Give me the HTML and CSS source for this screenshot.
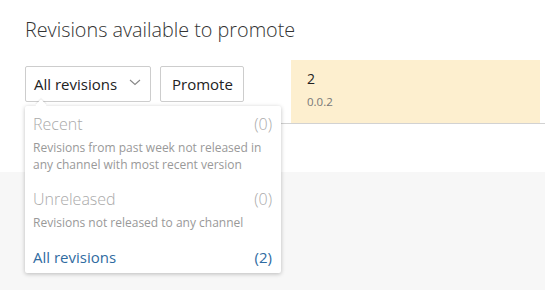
FILE: index.html
```html
<!DOCTYPE html>
<html>
<head>
<meta charset="utf-8">
<link rel="stylesheet" href="styles.css">
</head>
<body>
<div class="panel">
  <h2 class="title">Revisions available to promote</h2>
  <div class="row">
    <div class="controls">
      <div class="select-wrap">
        <div class="select">
          <span>All revisions</span>
          <svg class="chev" width="12" height="7" viewBox="0 0 12 7"><path d="M1 1 L6 5.5 L11 1" fill="none" stroke="#888" stroke-width="1.1"/></svg>
        </div>
        <div class="dropdown">
          <span class="notch"></span>
          <div class="item disabled">
            <div class="item-head"><span>Recent</span><span>(0)</span></div>
            <div class="desc">Revisions from past week not released in any channel with most recent version</div>
          </div>
          <div class="item disabled">
            <div class="item-head"><span>Unreleased</span><span>(0)</span></div>
            <div class="desc">Revisions not released to any channel</div>
          </div>
          <div class="item active">
            <div class="item-head"><span>All revisions</span><span>(2)</span></div>
          </div>
        </div>
      </div>
      <div class="button">Promote</div>
    </div>
    <div class="cell">
      <div class="rev">2</div>
      <div class="ver">0.0.2</div>
    </div>
  </div>
</div>
</body>
</html>
```
FILE: styles.css
```css
html, body {
  margin: 0;
  padding: 0;
}
body {
  background: #f7f7f7;
  font-family: "Open Sans", "Noto Sans", sans-serif;
  color: #333;
  width: 545px;
  height: 290px;
  overflow: hidden;
}
.panel {
  background: #fff;
  height: 172px;
  padding: 16px 0 0 25px;
  box-sizing: border-box;
}
.title {
  margin: 0;
  font-size: 19.8px;
  font-weight: 300;
  line-height: 28px;
  color: #333;
}
.row {
  margin-top: 16px;
  display: flex;
  border-bottom: 1px solid #d2d2d2;
  height: 63px;
}
.controls {
  display: flex;
  width: 266px;
  gap: 9px;
  padding-top: 6px;
  align-items: flex-start;
}
.select-wrap {
  position: relative;
}
.select {
  width: 126px;
  height: 36px;
  box-sizing: border-box;
  border: 1px solid #cdcdcd;
  border-radius: 2px;
  display: flex;
  align-items: center;
  justify-content: space-between;
  padding: 0 9px 0 8px;
  font-size: 15px;
  color: #222;
}
.chev {
  margin-top: -3px;
}
.button {
  height: 36px;
  box-sizing: border-box;
  border: 1px solid #cdcdcd;
  border-radius: 2px;
  padding: 0 10px 0 11px;
  display: flex;
  align-items: center;
  font-size: 15px;
  color: #222;
}
.dropdown {
  position: absolute;
  top: 40px;
  left: 0;
  width: 256px;
  background: #fff;
  border-radius: 2px;
  box-shadow: 0 1px 4px rgba(0, 0, 0, 0.25);
  z-index: 2;
}
.notch {
  position: absolute;
  top: -5px;
  left: 12px;
  width: 8px;
  height: 8px;
  background: #fff;
  transform: rotate(45deg);
  box-shadow: -1px -1px 1px rgba(0, 0, 0, 0.08);
}
.item {
  position: relative;
  padding: 8px 9px 8px 8px;
}
.item.active {
  padding-bottom: 6px;
}
.item-head {
  display: flex;
  justify-content: space-between;
  font-size: 16px;
  line-height: 20px;
  font-weight: 300;
  margin-bottom: 5px;
}
.disabled .item-head {
  color: #aaa;
}
.active .item-head {
  color: #2f6ba1;
  font-weight: 400;
  font-size: 15px;
  margin-bottom: 0;
}
.desc {
  font-size: 12px;
  line-height: 17px;
  color: #999;
  padding-right: 4px;
}
.cell {
  width: 249px;
  background: #fdefcf;
  padding: 9px 16px;
  box-sizing: border-box;
}
.rev {
  font-size: 14px;
  color: #222;
  line-height: 20px;
}
.ver {
  font-size: 11.5px;
  color: #777;
  line-height: 20px;
  margin-top: 3px;
}
```
